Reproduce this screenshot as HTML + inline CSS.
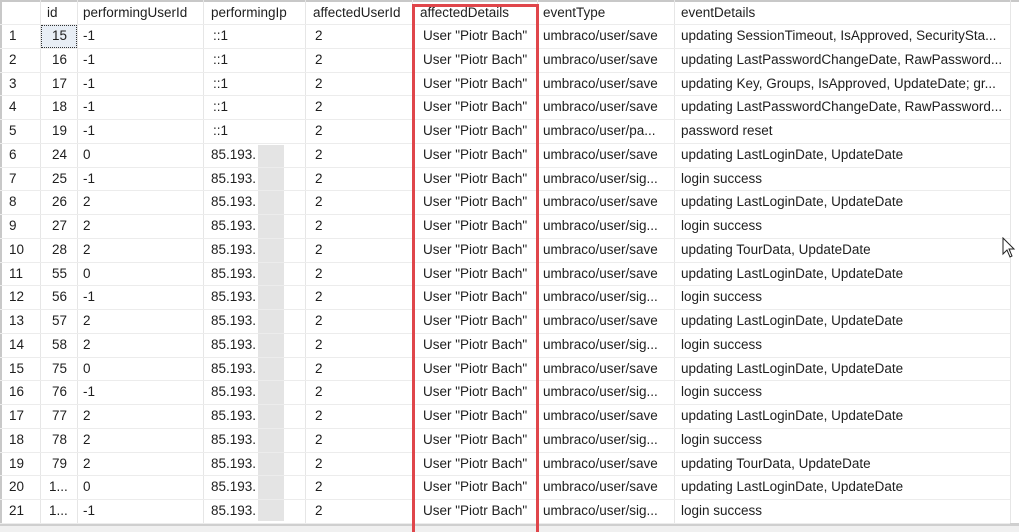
<!DOCTYPE html>
<html><head><meta charset="utf-8"><style>
*{margin:0;padding:0;box-sizing:border-box}
html,body{width:1019px;height:532px;overflow:hidden;background:#fff}
body{position:relative;font-family:"Liberation Sans",sans-serif;font-size:13.5px;color:#1e1e1e}
.vl{position:absolute;top:0;width:1px;background:#e6e6e6;height:523px}
.hl{position:absolute;left:0;width:1010px;height:1px;background:#ececec}
.t{position:absolute;white-space:nowrap;line-height:16px}
</style></head><body>
<div style="position:absolute;left:0;top:0;width:1019px;height:2px;background:#c8c8c8"></div>
<div style="position:absolute;left:0;top:0;width:2px;height:526px;background:#c8c8c8"></div>
<div style="position:absolute;left:0;top:523px;width:1019px;height:3px;background:#cfcfcf"></div>
<div style="position:absolute;left:0;top:526px;width:1019px;height:6px;background:#f0f0f0"></div>
<div style="position:absolute;left:41px;top:25px;width:36px;height:23px;background:#e8eef5;border:1px dotted #333"></div>
<div style="position:absolute;left:258px;top:145px;width:26px;height:376px;background:#e4e4e4"></div>
<div id="g"></div>
<div style="position:absolute;left:412px;top:4px;width:127px;height:528px;border:3px solid #e0464b;border-bottom:none"></div>
<svg style="position:absolute;left:1002px;top:237px" width="14" height="22" viewBox="0 0 14 22"><path d="M1 1 L1 17 L5 13 L8 20 L10 19 L7 12 L12 12 Z" fill="#fff" stroke="#222" stroke-width="1"/></svg>
<script>
var g=document.getElementById('g'),h='';
var cols=[40,77,203,305,412,537,674,1010];
cols.forEach(function(x){h+='<div class="vl" style="left:'+x+'px"></div>'});
for(var i=0;i<=21;i++){var y=Math.round(24+i*23.75);h+='<div class="hl" style="top:'+y+'px"></div>'}
var hd=[[47,'id'],[83,'performingUserId'],[211,'performingIp'],[313,'affectedUserId'],[420,'affectedDetails'],[543,'eventType'],[681,'eventDetails']];
hd.forEach(function(c){h+='<div class="t" style="left:'+c[0]+'px;top:5px">'+c[1]+'</div>'});
var rows=[
['15','-1','::1','updating SessionTimeout, IsApproved, SecuritySta...','umbraco/user/save'],
['16','-1','::1','updating LastPasswordChangeDate, RawPassword...','umbraco/user/save'],
['17','-1','::1','updating Key, Groups, IsApproved, UpdateDate; gr...','umbraco/user/save'],
['18','-1','::1','updating LastPasswordChangeDate, RawPassword...','umbraco/user/save'],
['19','-1','::1','password reset','umbraco/user/pa...'],
['24','0','85.193.','updating LastLoginDate, UpdateDate','umbraco/user/save'],
['25','-1','85.193.','login success','umbraco/user/sig...'],
['26','2','85.193.','updating LastLoginDate, UpdateDate','umbraco/user/save'],
['27','2','85.193.','login success','umbraco/user/sig...'],
['28','2','85.193.','updating TourData, UpdateDate','umbraco/user/save'],
['55','0','85.193.','updating LastLoginDate, UpdateDate','umbraco/user/save'],
['56','-1','85.193.','login success','umbraco/user/sig...'],
['57','2','85.193.','updating LastLoginDate, UpdateDate','umbraco/user/save'],
['58','2','85.193.','login success','umbraco/user/sig...'],
['75','0','85.193.','updating LastLoginDate, UpdateDate','umbraco/user/save'],
['76','-1','85.193.','login success','umbraco/user/sig...'],
['77','2','85.193.','updating LastLoginDate, UpdateDate','umbraco/user/save'],
['78','2','85.193.','login success','umbraco/user/sig...'],
['79','2','85.193.','updating TourData, UpdateDate','umbraco/user/save'],
['1...','0','85.193.','updating LastLoginDate, UpdateDate','umbraco/user/save'],
['1...','-1','85.193.','login success','umbraco/user/sig...']];
rows.forEach(function(r,i){var y=Math.round(28+i*23.75);
h+='<div class="t" style="left:9px;top:'+y+'px">'+(i+1)+'</div>';
h+='<div class="t" style="left:'+(r[0].length>2?49:52)+'px;top:'+y+'px">'+r[0]+'</div>';
h+='<div class="t" style="left:83px;top:'+y+'px">'+r[1]+'</div>';
h+='<div class="t" style="left:'+(r[2]=='::1'?213:211)+'px;top:'+y+'px">'+r[2]+'</div>';
h+='<div class="t" style="left:315px;top:'+y+'px">2</div>';
h+='<div class="t" style="left:423px;top:'+y+'px">User "Piotr Bach"</div>';
h+='<div class="t" style="left:543px;top:'+y+'px">'+r[4]+'</div>';
h+='<div class="t" style="left:681px;top:'+y+'px">'+r[3]+'</div>';
});
g.innerHTML=h;
</script>
</body></html>
